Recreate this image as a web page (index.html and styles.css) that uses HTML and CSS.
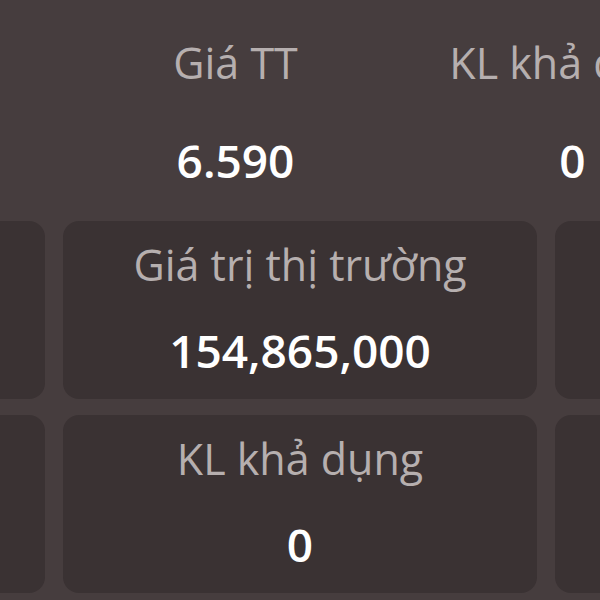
FILE: index.html
```html
<!DOCTYPE html>
<html lang="vi">
<head>
<meta charset="utf-8">
<link rel="stylesheet" href="styles.css">
</head>
<body>
<div class="page">
  <div class="summary">
    <div class="col"><div class="label">Giá vốn</div><div class="value">6.500</div></div>
    <div class="col"><div class="label">Giá TT</div><div class="value">6.590</div></div>
    <div class="col"><div class="label">KL khả dụng</div><div class="value">0</div></div>
  </div>
  <div class="grid">
    <div class="card"><div class="label">Giá trị vốn</div><div class="value">152,750,000</div></div>
    <div class="card"><div class="label">Giá trị thị trường</div><div class="value">154,865,000</div></div>
    <div class="card"><div class="label">Lãi/Lỗ</div><div class="value">2,115,000</div></div>
    <div class="card"><div class="label">Tổng KL</div><div class="value">23,500</div></div>
    <div class="card"><div class="label">KL khả dụng</div><div class="value">0</div></div>
    <div class="card"><div class="label">KL chờ về</div><div class="value">23,500</div></div>
  </div>
</div>
</body>
</html>
```
FILE: styles.css
```css
html, body {
  margin: 0;
  padding: 0;
  background: #463d3e;
  overflow: hidden;
}
.page {
  width: 600px;
  height: 600px;
  overflow: hidden;
  font-family: "Open Sans", "Noto Sans", sans-serif;
}
.label {
  font-size: 43px;
  line-height: 56px;
  color: #b6afaf;
  white-space: nowrap;
}
.value {
  font-size: 46px;
  line-height: 56px;
  font-weight: 600;
  color: #ffffff;
  white-space: nowrap;
}
.summary {
  display: flex;
  margin-left: -270px;
  padding-top: 35px;
  height: 187px;
  box-sizing: border-box;
}
.summary .col {
  flex: 0 0 337px;
  display: flex;
  flex-direction: column;
  align-items: center;
  gap: 41px;
}
.grid {
  display: grid;
  grid-template-columns: repeat(3, 474px);
  column-gap: 18px;
  row-gap: 16px;
  margin-left: -429px;
  margin-top: 34px;
}
.card {
  background: #3a3233;
  border-radius: 16px;
  height: 178px;
  box-sizing: border-box;
  padding-top: 16px;
  display: flex;
  flex-direction: column;
  align-items: center;
  gap: 29px;
}
```
